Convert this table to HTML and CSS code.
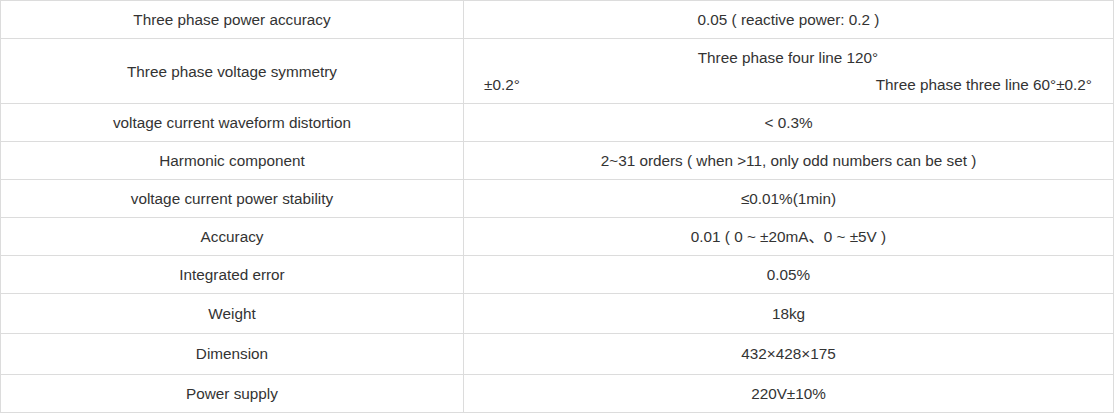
FILE: index.html
```html
<!DOCTYPE html>
<html>
<head>
<meta charset="utf-8">
<link rel="stylesheet" href="styles.css">
</head>
<body>
<table class="spec">
  <colgroup><col class="c-name"><col class="c-value"></colgroup>
  <tbody>
    <tr><td>Three phase power accuracy</td><td>0.05 ( reactive power: 0.2 )</td></tr>
    <tr><td>Three phase voltage symmetry</td><td class="multi"><div class="line-center">Three phase four line 120°</div><div class="line-split"><span>±0.2°</span><span>Three phase three line 60°±0.2°</span></div></td></tr>
    <tr><td>voltage current waveform distortion</td><td>&lt; 0.3%</td></tr>
    <tr><td>Harmonic component</td><td>2~31 orders ( when &gt;11, only odd numbers can be set )</td></tr>
    <tr><td>voltage current power stability</td><td>≤0.01%(1min)</td></tr>
    <tr><td>Accuracy</td><td>0.01 ( 0 ~ ±20mA、0 ~ ±5V )</td></tr>
    <tr><td>Integrated error</td><td>0.05%</td></tr>
    <tr class="r40"><td>Weight</td><td>18kg</td></tr>
    <tr class="r41"><td>Dimension</td><td>432×428×175</td></tr>
    <tr><td>Power supply</td><td>220V±10%</td></tr>
  </tbody>
</table>
</body>
</html>
```
FILE: styles.css
```css
html, body {
  margin: 0;
  padding: 0;
  background: #fff;
}
.spec {
  border-collapse: collapse;
  table-layout: fixed;
  width: 1113px;
  font-family: "Liberation Sans", Arial, "Noto Sans CJK SC", sans-serif;
  font-size: 15.3px;
  color: #333;
}
.c-name { width: 463px; }
.c-value { width: 650px; }
.spec td {
  border: 1px solid #dcdcdc;
  padding: 5px 20px;
  line-height: 27px;
  text-align: center;
  vertical-align: middle;
}
.spec td.multi { padding: 5px 21px 5px 20px; }
.spec .r40 td { line-height: 29px; }
.spec .r41 td { line-height: 30px; }
.line-center { text-align: center; }
.line-split {
  display: flex;
  justify-content: space-between;
}
```
